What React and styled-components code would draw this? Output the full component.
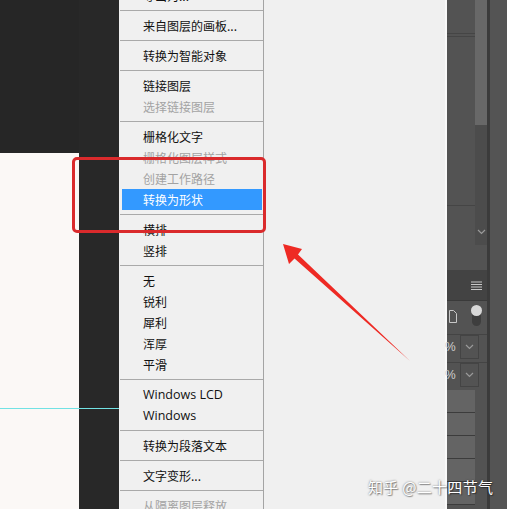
import React from 'react';
import styled, { createGlobalStyle } from 'styled-components';

const GlobalStyle = createGlobalStyle`
  html, body {
    margin: 0;
    padding: 0;
    background: #262626;
  }
  body {
    font-family: "Noto Sans CJK SC", "Noto Sans", sans-serif;
  }
`;

const Screen = styled.div`
  position: relative;
  display: flex;
  width: 507px;
  height: 509px;
  overflow: hidden;
  background: #262626;
`;

const CanvasColumn = styled.div`
  display: flex;
  flex-direction: column;
  width: 79px;
  flex-shrink: 0;
`;

const DarkTop = styled.div`
  height: 153px;
  background: #262626;
`;

const Canvas = styled.div`
  flex: 1;
  background: #fbf8f6;
`;

const Gutter = styled.div`
  width: 40px;
  flex-shrink: 0;
  background: #282828;
`;

const Menu = styled.div`
  width: 144px;
  flex-shrink: 0;
  display: flex;
  flex-direction: column;
  margin-top: -15px;
  background: #f0f0f0;
`;

const Item = styled.div`
  height: 21px;
  flex-shrink: 0;
  display: flex;
  align-items: center;
  margin: 0 1px 0 3px;
  padding-left: 21px;
  font-family: ${p => (p.$latin ? '"Open Sans", "Noto Sans", sans-serif' : '"Noto Sans CJK SC", sans-serif')};
  font-size: ${p => (p.$latin ? '12.5px' : '12px')};
  color: ${p => (p.$active ? '#ffffff' : p.$disabled ? '#a3a3a3' : '#111111')};
  background: ${p => (p.$active ? '#3399ff' : 'transparent')};
  white-space: nowrap;
`;

const Separator = styled.div`
  height: 9px;
  flex-shrink: 0;
  display: flex;
  align-items: center;
  padding-left: 1px;

  &::after {
    content: '';
    flex: 1;
    height: 1px;
    background: #a9a9a9;
  }
`;

const MenuRight = styled.div`
  flex: 1;
  background: #f0f0f0;
  border-left: 1px solid #a4a4a4;
  border-right: 2px solid #f9f9f9;
`;

const SidePanel = styled.div`
  width: 60px;
  flex-shrink: 0;
  display: flex;
  background: #535353;
`;

const PanelMain = styled.div`
  width: 40px;
  display: flex;
  flex-direction: column;
`;

const PanelDivider = styled.div`
  width: 3px;
  background: #3b3b3b;
`;

const PanelRest = styled.div`
  flex: 1;
  background: #545454;
`;

const ScrollZone = styled.div`
  height: ${p => p.$h}px;
  display: grid;
  grid-template-columns: 28px 12px;
`;

const ScrollLeft = styled.div`
  display: flex;
  flex-direction: column;
  padding-top: ${p => p.$lineTop}px;
`;

const HLine = styled.div`
  height: 1px;
  margin-bottom: 2px;
  background: #454545;
`;

const ScrollTrack = styled.div`
  background: ${p => (p.$light ? '#686868' : '#4c4c4c')};
  display: flex;
  align-items: flex-end;
  justify-content: center;
  padding-bottom: 10px;
  color: #8a8a8a;
`;

const PanelHeader = styled.div`
  height: 30px;
  margin-top: 25px;
  background: #434343;
  border-bottom: 1px solid #3a3a3a;
  display: flex;
  align-items: center;
  justify-content: flex-end;
  padding-right: 5px;
`;

const ToggleRow = styled.div`
  height: 30px;
  display: flex;
  align-items: center;
  justify-content: space-between;
  padding: 0 6px 0 2px;
`;

const Toggle = styled.div`
  width: 9px;
  height: 20px;
  border-radius: 5px;
  background: #3e3e3e;
  position: relative;

  &::before {
    content: '';
    position: absolute;
    top: -1px;
    left: -1px;
    width: 11px;
    height: 11px;
    border-radius: 50%;
    background: #d8d8d8;
  }
`;

const DropRow = styled.div`
  height: 24px;
  margin-top: 3px;
  display: flex;
  align-items: center;
  border-top: 1px solid #444;
  color: #cfcfcf;
  font-family: "Liberation Sans", sans-serif;
  font-size: 12px;
`;

const Percent = styled.span`
  width: 14px;
  margin-left: -2px;
`;

const DropBox = styled.div`
  width: 17px;
  height: 22px;
  border: 1px solid #444;
  display: flex;
  align-items: center;
  justify-content: center;
  margin-left: 1px;
`;

const Swatch = styled.div`
  height: 22px;
  width: 28px;
  background: #646464;
  border-bottom: 1px solid #3c3c3c;
  flex-shrink: 0;
`;

const SwatchStack = styled.div`
  margin-top: 3px;
  display: flex;
  flex-direction: column;
`;

const GuideLine = styled.div`
  position: absolute;
  left: 0;
  top: 408px;
  width: 119px;
  height: 1px;
  background: #72e2e4;
`;

const RedBox = styled.div`
  position: absolute;
  left: 72px;
  top: 157px;
  width: 188px;
  height: 70px;
  border: 3px solid #da2a2c;
  border-radius: 5px;
`;

const ArrowLayer = styled.svg`
  position: absolute;
  left: 0;
  top: 0;
  pointer-events: none;
`;

const Watermark = styled.div`
  position: absolute;
  left: 368px;
  top: 476px;
  font-family: "Noto Sans CJK SC", sans-serif;
  font-size: 15px;
  color: #ffffff;
  letter-spacing: 0.3px;
  text-shadow: 0 0 2px rgba(0, 0, 0, 0.55), 1px 1px 1px rgba(0, 0, 0, 0.35);
  white-space: nowrap;
`;

const Chevron = ({ color = '#9a9a9a' }) => (
  <svg width="9" height="6" viewBox="0 0 9 6">
    <path d="M1 1l3.5 3.5L8 1" fill="none" stroke={color} strokeWidth="1.2" />
  </svg>
);

const menu = [
  { t: '导出为...' },
  'sep',
  { t: '来自图层的画板...' },
  'sep',
  { t: '转换为智能对象' },
  'sep',
  { t: '链接图层' },
  { t: '选择链接图层', disabled: true },
  'sep',
  { t: '栅格化文字' },
  { t: '栅格化图层样式', disabled: true },
  { t: '创建工作路径', disabled: true },
  { t: '转换为形状', active: true },
  'sep',
  { t: '横排' },
  { t: '竖排' },
  'sep',
  { t: '无' },
  { t: '锐利' },
  { t: '犀利' },
  { t: '浑厚' },
  { t: '平滑' },
  'sep',
  { t: 'Windows LCD', latin: true },
  { t: 'Windows', latin: true },
  'sep',
  { t: '转换为段落文本' },
  'sep',
  { t: '文字变形...' },
  'sep',
  { t: '从隔离图层释放', disabled: true },
];

export default function App() {
  return (
    <>
      <GlobalStyle />
      <Screen>
        <CanvasColumn>
          <DarkTop />
          <Canvas />
        </CanvasColumn>
        <Gutter />
        <Menu>
          {menu.map((m, i) =>
            m === 'sep' ? (
              <Separator key={i} />
            ) : (
              <Item key={i} $disabled={m.disabled} $active={m.active} $latin={m.latin}>
                {m.t}
              </Item>
            )
          )}
        </Menu>
        <MenuRight />
        <SidePanel>
          <PanelMain>
            <ScrollZone $h={125}>
              <ScrollLeft $lineTop={33}>
                <HLine />
                <HLine />
              </ScrollLeft>
              <ScrollTrack $light />
            </ScrollZone>
            <ScrollZone $h={120}>
              <ScrollLeft $lineTop={80}>
                <HLine />
              </ScrollLeft>
              <ScrollTrack>
                <Chevron />
              </ScrollTrack>
            </ScrollZone>
            <PanelHeader>
              <svg width="11" height="9" viewBox="0 0 11 9">
                <path d="M0 1h11M0 3.5h11M0 6h11M0 8.5h11" stroke="#c8c8c8" strokeWidth="1" />
              </svg>
            </PanelHeader>
            <ToggleRow>
              <svg width="8" height="13" viewBox="0 0 8 13">
                <path d="M0.5 0.5h4l3 3v9h-7z" fill="none" stroke="#c8c8c8" strokeWidth="1" />
              </svg>
              <Toggle />
            </ToggleRow>
            <DropRow>
              <Percent>%</Percent>
              <DropBox>
                <Chevron />
              </DropBox>
            </DropRow>
            <DropRow>
              <Percent>%</Percent>
              <DropBox>
                <Chevron />
              </DropBox>
            </DropRow>
            <SwatchStack>
              <Swatch />
              <Swatch />
              <Swatch />
              <Swatch />
              <Swatch />
            </SwatchStack>
          </PanelMain>
          <PanelDivider />
          <PanelRest />
        </SidePanel>

        <GuideLine />
        <RedBox />
        <ArrowLayer width="507" height="509" viewBox="0 0 507 509">
          <polygon
            points="283,244 289,264 294.5,258.5 410,361 298,254.5 302,249"
            fill="#ee2a24"
          />
        </ArrowLayer>
        <Watermark>知乎 @二十四节气</Watermark>
      </Screen>
    </>
  );
}
